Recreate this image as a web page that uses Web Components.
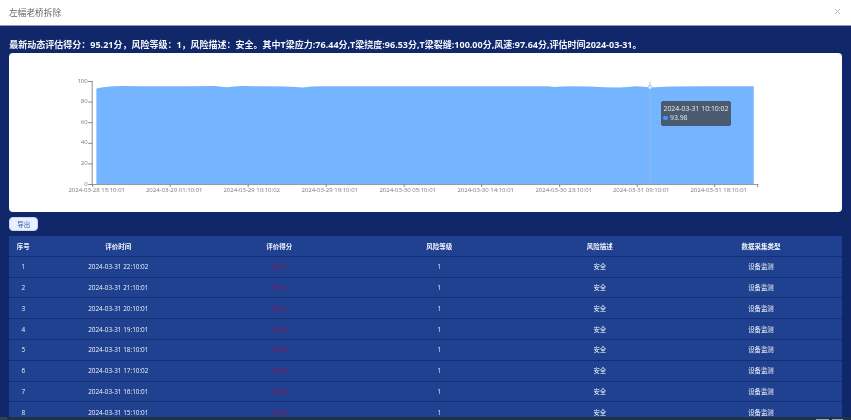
<!DOCTYPE html>
<html lang="zh"><head><meta charset="utf-8">
<style>
html,body{margin:0;padding:0;height:100%;overflow:hidden;background:#10286a}
body{font-family:"Noto Sans CJK SC","Open Sans",sans-serif}
</style></head><body>
<bridge-dialog></bridge-dialog>
<script>
const FONT='"Open Sans","Noto Sans CJK SC",sans-serif';
class DialogHeader extends HTMLElement{constructor(){super();this.attachShadow({mode:'open'}).innerHTML=`<style>
:host{display:flex;align-items:center;justify-content:space-between;height:25px;padding:0 10px 0 9px;background:#fff;border-bottom:1px solid #8c9ab8;font:8.7px ${FONT};color:#666}
svg{display:block;margin-top:-2px}
</style><span><slot></slot></span><svg width="7" height="7" viewBox="0 0 7 7"><path d="M1 1L6 6M6 1L1 6" stroke="#b4b8c0" stroke-width="1"/></svg>`}}
customElements.define('dialog-header',DialogHeader);

class ScoreChart extends HTMLElement{constructor(){super();
 const ox=9.3,oy=53,X=x=>+(x-ox).toFixed(1),Y=y=>y-oy;
 const yTicks=[[100,81],[80,101.6],[60,122.2],[40,142.8],[20,163.4],[0,184]];
 const labels=[['2024-03-28 15:10:01',97],['2024-03-29 01:10:01',174.5],['2024-03-29 10:10:02',252],['2024-03-29 19:10:01',330],['2024-03-30 05:10:01',408],['2024-03-30 14:10:01',486],['2024-03-30 23:10:01',564],['2024-03-31 09:10:01',641.5],['2024-03-31 18:10:01',719]];
 const pts=[[96.7,88.4],[103,87.3],[113,86.3],[125,86.1],[140,86.3],[160,86.2],[190,86.2],[215,86.1],[222,86.8],[227,87.2],[234,86.4],[243,86.1],[270,86.3],[285,86.6],[296,87],[303,87.5],[312,86.5],[322,86.2],[350,86.2],[400,86.2],[450,86.2],[520,86.2],[548,86.3],[555,87],[562,86.6],[570,86.3],[590,86.5],[605,87.2],[620,87.6],[628,87],[636,86.3],[644,86.8],[650,87.4],[660,87.1],[672,86.4],[700,86.3],[725,86.2],[754,86.3]];
 let line='M'+pts.map(p=>X(p[0])+' '+Y(p[1]).toFixed(1)).join('L');
 const area=line+`L${X(754)} ${Y(184)}L${X(96.7)} ${Y(184)}Z`;
 const ticksY=yTicks.map(([v,y])=>`<path d="M${X(88.5)} ${Y(y)+.5}H${X(93)}" stroke="#888"/><text x="${X(88)}" y="${Y(y)+1.6}" text-anchor="end">${v}</text>`).join('');
 const ticksX=[93,170.5,248.5,326.5,404.5,482,560,637.5,715,758].map(x=>`<path d="M${X(x)} ${Y(184)}v3" stroke="#888"/>`).join('');
 const labs=labels.map(([t,x])=>`<text x="${X(x)}" y="${Y(192.2)}" text-anchor="middle">${t}</text>`).join('');
 this.attachShadow({mode:'open'}).innerHTML=`<style>
:host{display:block;position:relative;height:159px;background:#fff;border-radius:4px;overflow:hidden}
svg{display:block;font:6px ${FONT};fill:#7a7a7a}
.tip{position:absolute;left:651.7px;top:48px;width:70px;height:24.5px;padding:2.5px 2.5px;box-sizing:border-box;background:#4a5b6f;border-radius:2px;color:#e8ecf2;font:6.9px/9.7px ${FONT};white-space:nowrap}
.tip i{display:inline-block;width:4.5px;height:4.5px;border-radius:50%;background:#3a9cff;margin-right:2px;vertical-align:0}
</style><svg width="832" height="159" viewBox="0 0 832 159">
<path d="${area}" fill="#75b5ff"/>
<path d="M${X(92.5)} ${Y(81)}V${Y(184.5)}M${X(92)} ${Y(184.5)}H${X(758.5)}" stroke="#999" stroke-width="1.1" fill="none"/>
${ticksY}${ticksX}${labs}
<path d="M${X(650.3)} ${Y(81.5)}V${Y(184)}" stroke="#a3b8d2" stroke-width=".8"/>
<circle cx="${X(650.3)}" cy="${Y(87.3)}" r="1.9" fill="#e8f2ff" stroke="#75b5ff" stroke-width=".7"/>
</svg><div class="tip">2024-03-31 10:10:02<br><i></i>93.98</div>`}}
customElements.define('score-chart',ScoreChart);

class ExportButton extends HTMLElement{constructor(){super();this.attachShadow({mode:'open'}).innerHTML=`<style>
:host{display:flex;align-items:center;justify-content:center;width:29px;height:14px;box-sizing:border-box;background:#e9effc;border:1px solid #c9d6f2;border-radius:4px;color:#2c5fa8;font:6.5px ${FONT}}
</style><slot></slot>`}}
customElements.define('export-button',ExportButton);

const COLS='28px 162px 160px 160px 161px 1fr';
class DataRow extends HTMLElement{constructor(){super();
 const cells=JSON.parse(this.getAttribute('cells'));const head=this.hasAttribute('head');
 this.attachShadow({mode:'open'}).innerHTML=`<style>
:host{display:grid;grid-template-columns:${COLS};align-items:center;justify-items:center;height:20.8px;box-sizing:border-box;border-bottom:1px solid #142f7a;background:#20418f;color:#eef1f8;font:6.4px ${FONT};flex:none}
.h{font-weight:700;color:#f2f4fa;font-size:6.5px}
.s{color:#93124c}
</style>${cells.map((c,i)=>`<span class="${head?'h':(i==2?'s':'')}">${c}</span>`).join('')}`}}
customElements.define('data-row',DataRow);

class BridgeDialog extends HTMLElement{constructor(){super();
 const rows=[['22:10:02','95.21'],['21:10:01','95.5'],['20:10:01','95.51'],['19:10:01','95.42'],['18:10:01','95.42'],['17:10:02','95.42'],['16:10:01','95.42'],['15:10:01','95.42']];
 const tr=rows.map((r,i)=>`<data-row cells='${JSON.stringify([i+1,'2024-03-31 '+r[0],r[1],'1','安全','设备监测'])}'></data-row>`).join('');
 this.attachShadow({mode:'open'}).innerHTML=`<style>
:host{display:flex;flex-direction:column;width:851px;height:420px;position:relative;overflow:hidden;background:#10286a;filter:blur(.3px)}
main{flex:1;min-height:0;padding:0 9.4px 0 9.3px;display:flex;flex-direction:column;overflow:hidden}
h1{margin:0;height:27px;flex:none;font:700 9px/37px ${FONT};color:#f4f6fb;white-space:nowrap}
.bar{flex:none;padding:5px 0 5px}
.table{display:flex;flex-direction:column;flex:1;min-height:0;overflow:hidden}
.strip{flex:none;height:3px;background:#1d3446;display:flex;align-items:flex-end;gap:3px;padding-right:8px}
.strip b{height:1.5px;background:#9aa6b4}
.strip .a{width:13px;margin-left:auto}.strip .c{width:11px}
.strip .l{width:7px;height:3px;background:#2c4450;margin-right:auto}
</style><dialog-header>左幅老桥拆除</dialog-header>
<main><h1>最新动态评估得分：95.21分，风险等级：1，风险描述：安全。其中T梁应力:76.44分,T梁挠度:96.53分,T梁裂缝:100.00分,风速:97.64分,评估时间2024-03-31。</h1>
<score-chart></score-chart><div class="bar"><export-button>导出</export-button></div>
<div class="table"><data-row head cells='["序号","评价时间","评价得分","风险等级","风险描述","数据采集类型"]'></data-row>${tr}</div></main><div class="strip"><b class="l"></b><b class="a"></b><b class="c"></b></div>`}}
customElements.define('bridge-dialog',BridgeDialog);
</script></body></html>
